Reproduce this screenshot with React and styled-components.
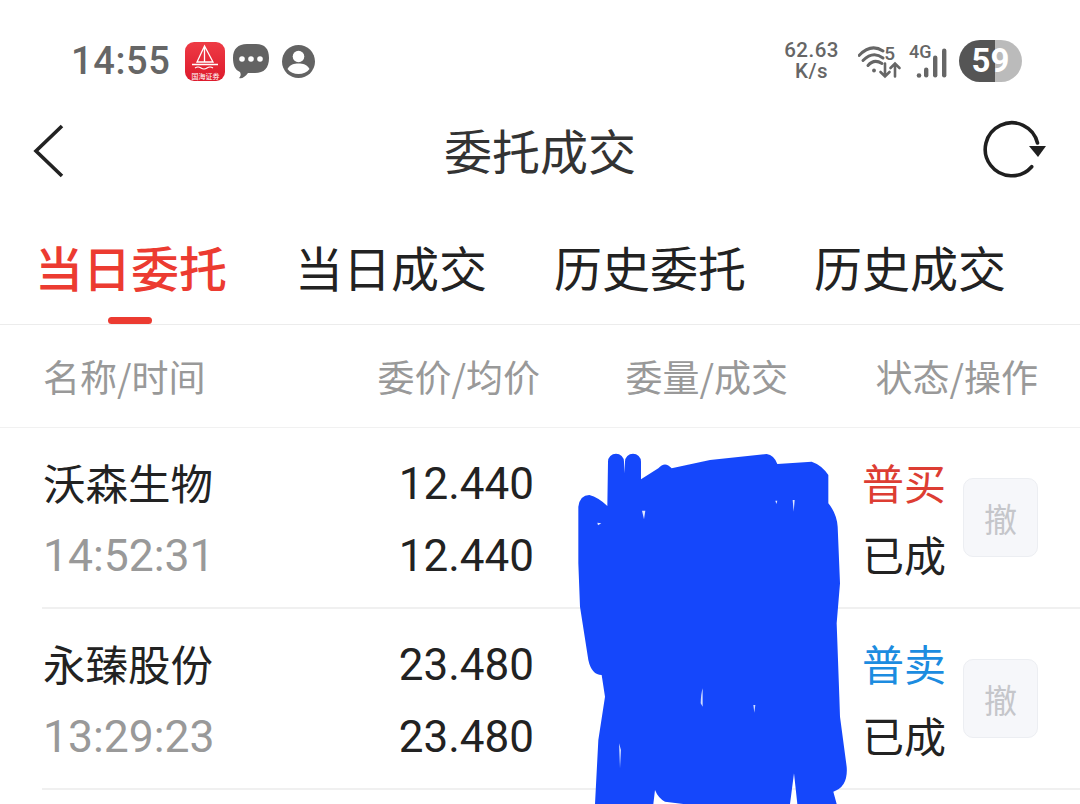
import React from "react";
import styled, { createGlobalStyle } from "styled-components";

const Global = createGlobalStyle`
  html, body { margin: 0; padding: 0; background: #fff; }
  body { font-family: "Noto Sans CJK SC", "Noto Sans", sans-serif; }
`;

const Page = styled.div`
  position: relative;
  width: 1080px;
  height: 804px;
  overflow: hidden;
  background: #fff;
`;

const StatusBar = styled.div`
  height: 113px;
  box-sizing: border-box;
  padding: 39px 58px 0 71px;
  display: flex;
  justify-content: space-between;
  align-items: flex-start;
`;
const StatusGroup = styled.div`
  display: flex;
  align-items: center;
  height: 43px;
  margin-top: ${(p) => p.$drop || 0}px;
`;
const Clock = styled.span`
  font: 500 38px/43px Roboto, sans-serif;
  letter-spacing: 0.6px;
  color: #666;
  margin-right: 15px;
`;
const AppIcon = styled.div`
  width: 40px;
  height: 39px;
  border-radius: 9px;
  background: linear-gradient(180deg, #ee3b45, #dd1a2c);
  display: flex;
  flex-direction: column;
  align-items: center;
  margin-right: 8px;
  overflow: hidden;
`;
const AppLabel = styled.span`
  font-size: 7px;
  line-height: 8px;
  color: #fff;
  white-space: nowrap;
`;
const Speed = styled.div`
  font: 500 20.5px/21px Roboto, sans-serif;
  color: #666;
  text-align: center;
  margin-right: 19px;
  letter-spacing: 0.5px;
`;
const WifiWrap = styled.div`
  position: relative;
  width: 44px;
  height: 36px;
  margin-right: 7px;
`;
const WifiFive = styled.span`
  position: absolute;
  right: 7px;
  top: 1px;
  font: 500 19px/20px Roboto, sans-serif;
  color: #666;
`;
const SignalWrap = styled.div`
  position: relative;
  width: 40px;
  height: 36px;
  margin-right: 10px;
`;
const FourG = styled.span`
  position: absolute;
  left: 0;
  top: 0;
  font: 500 18px/17px Roboto, sans-serif;
  color: #666;
`;
const Battery = styled.div`
  position: relative;
  width: 63px;
  height: 42px;
  border-radius: 21px;
  overflow: hidden;
  background: linear-gradient(90deg, #555 0, #555 36px, #bbb 36px, #bbb 100%);
  font: 700 33px/42px Roboto, sans-serif;
  color: #fff;
  text-align: center;
`;

const NavBar = styled.div`
  height: 76px;
  padding: 0 30px;
  display: grid;
  grid-template-columns: 1fr auto 1fr;
  align-items: center;
`;
const NavTitle = styled.div`
  font-size: 48px;
  line-height: 72px;
  padding-bottom: 4px;
  color: #333;
`;
const RefreshSlot = styled.div`
  display: flex;
  justify-content: flex-end;
  margin-right: 4px;
`;

const Tabs = styled.div`
  height: 136px;
  box-sizing: border-box;
  border-bottom: 1px solid #ececec;
  display: grid;
  grid-template-columns: 260px 259px 260px 1fr;
  padding-left: 35px;
`;
const Tab = styled.div`
  position: relative;
  font-size: 48px;
  font-weight: ${(p) => (p.$active ? 500 : 400)};
  color: ${(p) => (p.$active ? "#ec3b31" : "#222")};
  line-height: 60px;
  padding-top: 47px;
  white-space: nowrap;
`;
const TabMark = styled.span`
  position: absolute;
  left: 73px;
  bottom: 0;
  width: 44px;
  height: 7px;
  border-radius: 4px;
  background: #ec3b31;
`;

const Header = styled.div`
  height: 103px;
  box-sizing: border-box;
  border-bottom: 1px solid #f1f1f1;
  padding: 0 42px 0 43px;
  display: grid;
  grid-template-columns: 280px 217px 248px 1fr;
  align-items: center;
  font-size: 37px;
  color: #999;
`;
const HeadCell = styled.div`
  text-align: ${(p) => (p.$end ? "right" : "left")};
  white-space: nowrap;
`;

const Row = styled.div`
  margin-left: 42px;
  height: 181px;
  box-sizing: border-box;
  border-bottom: 2px solid #f0f0f0;
  padding: 0 42px 0 1px;
  display: grid;
  grid-template-columns: 280px 211px 328px 83px 1fr;
  align-items: center;
`;
const Stack = styled.div`
  display: flex;
  flex-direction: column;
  align-items: ${(p) => (p.$end ? "flex-end" : "flex-start")};
`;
const Name = styled.div`
  font-size: 42.5px;
  line-height: 72px;
  color: #222;
  white-space: nowrap;
`;
const Time = styled.div`
  font: 400 44.5px/68px Roboto, sans-serif;
  padding-top: 4px;
  color: #999;
`;
const Price = styled.div`
  font: 400 44px/68px Roboto, sans-serif;
  padding-top: 4px;
  color: #222;
`;
const StatusText = styled.div`
  font-size: 42px;
  line-height: 72px;
  white-space: nowrap;
  color: ${(p) => p.$color};
`;
const Cancel = styled.div`
  justify-self: end;
  width: 75px;
  height: 79px;
  box-sizing: border-box;
  border: 1px solid #eceef2;
  border-radius: 10px;
  background: #f6f7fa;
  color: #c5c6ca;
  font-size: 33px;
  display: flex;
  align-items: center;
  justify-content: center;
`;

const Scribble = styled.svg`
  position: absolute;
  left: 570px;
  top: 440px;
  width: 300px;
  height: 364px;
`;

const rows = [
  { name: "沃森生物", time: "14:52:31", p1: "12.440", p2: "12.440", type: "普买", color: "#dd3d33" },
  { name: "永臻股份", time: "13:29:23", p1: "23.480", p2: "23.480", type: "普卖", color: "#1c8ce0" },
];

const scribblePath =
  "M25 200 Q30 165 58 165 Q85 172 112 198 L114 65 A24 24 0 0 1 162 65 L163 100 L165 65 A24 24 0 0 1 213 65 L213 118 L265 85 Q285 62 305 85 L420 60 L590 42 Q612 45 622 72 L725 65 Q755 75 775 105 L775 190 Q800 220 803 260 L810 430 L800 550 L808 770 L810 830 L830 980 Q835 1040 790 1055 L800 1092 L682 1092 L672 1000 L660 1092 L340 1092 L285 1085 Q265 1075 255 1050 L250 1092 L75 1092 L85 900 L105 770 L95 705 Q65 705 55 660 L30 500 L25 370 Z";

export default function App() {
  return (
    <Page>
      <Global />
      <StatusBar>
        <StatusGroup $drop={1}>
          <Clock>14:55</Clock>
          <AppIcon>
            <svg width="40" height="30" viewBox="0 0 40 30" fill="none" stroke="#fff">
              <path d="M19.5 4 L12 20 H28 Z M19.5 4 V20" strokeWidth="1.3" />
              <path d="M7 22.5 H33" strokeWidth="1.4" />
              <path d="M10 26 q3 -2 6 0 t6 0 t6 0" strokeWidth="1.1" />
            </svg>
            <AppLabel>国海证券</AppLabel>
          </AppIcon>
          <svg width="37" height="38" viewBox="0 0 37 38" style={{ marginRight: 12 }}>
            <path d="M14 1 H23 C32 1 36 6 36 15 C36 25 31 30 22 30 H15 C12 34 9 36 6 35 C8 33 8 31 7 29 C2 27 0 22 0 15 C0 6 5 1 14 1 Z" fill="#636363" />
            <circle cx="9" cy="16" r="2.8" fill="#fff" />
            <circle cx="18" cy="16" r="2.8" fill="#fff" />
            <circle cx="27" cy="16" r="2.8" fill="#fff" />
          </svg>
          <svg width="33" height="33" viewBox="0 0 33 33">
            <circle cx="16.5" cy="16.5" r="16.5" fill="#636363" />
            <circle cx="16.5" cy="11.5" r="5.8" fill="#fff" />
            <path d="M5.5 24 C8 19.5 12 18.5 16.5 18.5 C21 18.5 25 19.5 27.5 24 C25 27.5 21 29 16.5 29 C12 29 8 27.5 5.5 24 Z" fill="#fff" />
          </svg>
        </StatusGroup>
        <StatusGroup>
          <Speed>
            62.63
            <br />
            K/s
          </Speed>
          <WifiWrap>
            <svg width="44" height="36" viewBox="0 0 44 36" fill="none" stroke="#666" strokeWidth="3" strokeLinecap="round">
              <path d="M1 12.500 Q13 0 25 8" />
              <path d="M5 17.500 Q15 7.500 25 15" />
              <path d="M10 22.500 Q16 15.500 24 20.500" />
              <circle cx="16" cy="27.500" r="1.9" fill="#666" stroke="none" />
              <path d="M27 20.500 V33.500 M22.500 29 L27 33.500 L31.500 29" strokeWidth="2.6" />
              <path d="M37 33.500 V20.500 M32.500 25 L37 20.500 L41.500 25" strokeWidth="2.6" />
            </svg>
            <WifiFive>5</WifiFive>
          </WifiWrap>
          <SignalWrap>
            <FourG>4G</FourG>
            <svg width="40" height="36" viewBox="0 0 40 36" fill="#666">
              <circle cx="10" cy="32.500" r="2.3" />
              <rect x="15" y="24.500" width="4.4" height="10" rx="2.2" />
              <rect x="24" y="12.500" width="4.4" height="22" rx="2.2" />
              <rect x="33" y="5.500" width="4.4" height="29" rx="2.2" />
            </svg>
          </SignalWrap>
          <Battery>59</Battery>
        </StatusGroup>
      </StatusBar>

      <NavBar>
        <svg width="36" height="56" viewBox="0 0 36 56" fill="none" stroke="#222" strokeWidth="3.6">
          <path d="M32 3 L6 28 L32 53" />
        </svg>
        <NavTitle>委托成交</NavTitle>
        <RefreshSlot>
          <svg width="66" height="70" viewBox="0 0 66 70" fill="none">
            <path d="M57.500 27 A26.500 26.500 0 1 0 51.700 50.700" stroke="#1f1f1f" strokeWidth="3.6" strokeLinecap="round" />
            <path d="M49 30 H66 L58 41 Z" fill="#1f1f1f" />
          </svg>
        </RefreshSlot>
      </NavBar>

      <Tabs>
        <Tab $active>
          当日委托
          <TabMark />
        </Tab>
        <Tab>当日成交</Tab>
        <Tab>历史委托</Tab>
        <Tab>历史成交</Tab>
      </Tabs>

      <Header>
        <HeadCell>名称/时间</HeadCell>
        <HeadCell $end>委价/均价</HeadCell>
        <HeadCell $end>委量/成交</HeadCell>
        <HeadCell $end>状态/操作</HeadCell>
      </Header>

      {rows.map((r) => (
        <Row key={r.name}>
          <Stack>
            <Name>{r.name}</Name>
            <Time>{r.time}</Time>
          </Stack>
          <Stack $end>
            <Price>{r.p1}</Price>
            <Price>{r.p2}</Price>
          </Stack>
          <div />
          <Stack>
            <StatusText $color={r.color}>{r.type}</StatusText>
            <StatusText $color="#222">已成</StatusText>
          </Stack>
          <Cancel>撤</Cancel>
        </Row>
      ))}

      <Scribble viewBox="0 0 900 1092">
        <path d={scribblePath} fill="#1547fb" />
        <path d="M216 212 L226 212 L222 238 Z M82 248 L94 250 L84 256 Z M668 180 L674 180 L671 215 Z M616 182 L622 182 L619 192 Z" fill="#dfe7ff" />
        <path d="M392 790 Q393 760 398 745 L398 800 Z M550 795 L556 795 L553 818 Z M147 910 L153 930 L150 985 Z" fill="#cfdcff" />
      </Scribble>
    </Page>
  );
}
